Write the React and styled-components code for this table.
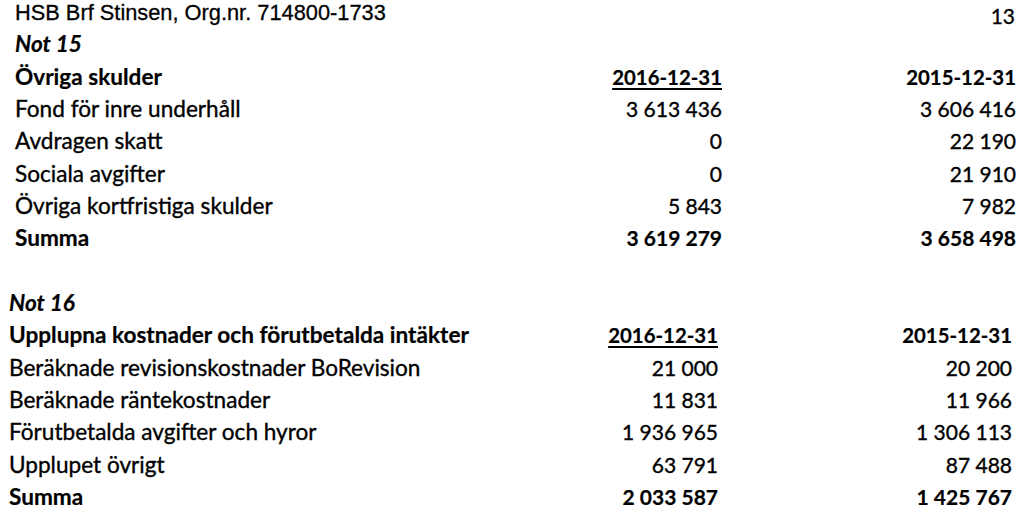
import React from "react";
import styled, { createGlobalStyle } from "styled-components";

const GlobalStyle = createGlobalStyle`
  html, body {
    margin: 0;
    padding: 0;
    background: #ffffff;
  }
  body {
    width: 1024px;
    height: 514px;
    overflow: hidden;
    color: #000000;
    font-family: Lato, "Liberation Sans", sans-serif;
  }
`;

const ROW = "32.33px";

const Page = styled.div`
  display: flex;
  flex-direction: column;
  width: 1024px;
  height: 514px;
  box-sizing: border-box;
`;

const PageHeader = styled.header`
  display: flex;
  justify-content: space-between;
  align-items: flex-start;
  height: 28.3px;
  padding: 0 9px 0 15px;
`;

const OrgName = styled.div`
  font-family: "Liberation Sans", Arial, sans-serif;
  font-size: 21.8px;
  line-height: 26px;
  -webkit-text-stroke: 0.3px #000;
`;

const PageNo = styled.div`
  font-size: 21px;
  line-height: 26px;
  margin-top: 3px;
  -webkit-text-stroke: 0.3px #000;
`;

const Section = styled.section`
  display: grid;
  grid-template-columns: 1fr 140px 294px;
  grid-auto-rows: ${ROW};
  padding: 0 ${({ $right }) => $right}px 0 ${({ $left }) => $left}px;
`;

const Spacer = styled.div`
  height: ${ROW};
`;

const Cell = styled.div`
  font-size: ${({ $num }) => ($num ? "21px" : "22.6px")};
  line-height: ${ROW};
  white-space: nowrap;
  font-weight: ${({ $bold }) => ($bold ? 700 : 400)};
  font-style: ${({ $italic }) => ($italic ? "italic" : "normal")};
  text-align: ${({ $num }) => ($num ? "right" : "left")};
  grid-column: ${({ $span }) => ($span ? "1 / -1" : "auto")};
  -webkit-text-stroke: ${({ $bold }) => ($bold ? "0.2px" : "0.35px")} #000;
`;

const DateHead = styled.span`
  font-size: 20.4px;
  text-decoration: ${({ $underline }) => ($underline ? "underline" : "none")};
  text-decoration-thickness: 2px;
  text-underline-offset: 3px;
`;

const Note = ({ title, heading, rows, total, left, right }) => (
  <Section $left={left} $right={right}>
    <Cell $bold $italic $span>
      {title}
    </Cell>
    <Cell $bold>{heading}</Cell>
    <Cell $bold $num>
      <DateHead $underline>2016-12-31</DateHead>
    </Cell>
    <Cell $bold $num>
      <DateHead>2015-12-31</DateHead>
    </Cell>
    {rows.map(([label, a, b]) => (
      <React.Fragment key={label}>
        <Cell>{label}</Cell>
        <Cell $num>{a}</Cell>
        <Cell $num>{b}</Cell>
      </React.Fragment>
    ))}
    <Cell $bold>Summa</Cell>
    <Cell $bold $num>
      {total[0]}
    </Cell>
    <Cell $bold $num>
      {total[1]}
    </Cell>
  </Section>
);

const not15 = [
  ["Fond för inre underhåll", "3 613 436", "3 606 416"],
  ["Avdragen skatt", "0", "22 190"],
  ["Sociala avgifter", "0", "21 910"],
  ["Övriga kortfristiga skulder", "5 843", "7 982"],
];

const not16 = [
  ["Beräknade revisionskostnader BoRevision", "21 000", "20 200"],
  ["Beräknade räntekostnader", "11 831", "11 966"],
  ["Förutbetalda avgifter och hyror", "1 936 965", "1 306 113"],
  ["Upplupet övrigt", "63 791", "87 488"],
];

const App = () => {
  return (
    <>
      <GlobalStyle />
      <Page>
        <PageHeader>
          <OrgName>HSB Brf Stinsen, Org.nr. 714800-1733</OrgName>
          <PageNo>13</PageNo>
        </PageHeader>
        <Note
          title="Not 15"
          heading="Övriga skulder"
          rows={not15}
          total={["3 619 279", "3 658 498"]}
          left={15}
          right={8}
        />
        <Spacer />
        <Note
          title="Not 16"
          heading="Upplupna kostnader och förutbetalda intäkter"
          rows={not16}
          total={["2 033 587", "1 425 767"]}
          left={9}
          right={12}
        />
      </Page>
    </>
  );
};

export default App;
